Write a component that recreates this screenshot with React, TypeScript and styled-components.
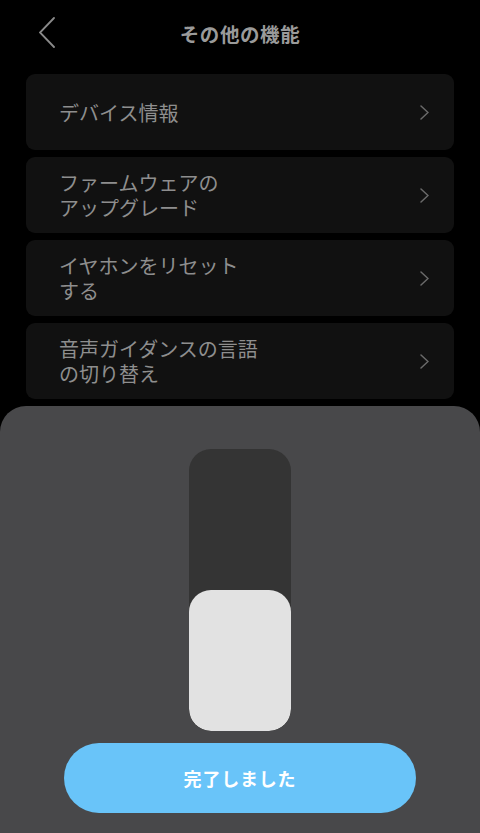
import React from "react";
import styled, { createGlobalStyle } from "styled-components";

const GlobalStyle = createGlobalStyle`
  html, body {
    margin: 0;
    padding: 0;
    background: #000;
  }
  body {
    font-family: "Noto Sans CJK JP", "Noto Sans", sans-serif;
  }
`;

const Screen = styled.div`
  position: relative;
  width: 480px;
  height: 833px;
  background: #000;
  overflow: hidden;
`;

const Header = styled.header`
  height: 66px;
  display: flex;
  align-items: center;
  justify-content: center;
  position: relative;
`;

const BackButton = styled.button`
  position: absolute;
  left: 30px;
  top: 12px;
  width: 34px;
  height: 40px;
  background: none;
  border: none;
  padding: 0;
  display: flex;
  align-items: center;
  justify-content: center;
`;

const Title = styled.h1`
  margin: 0;
  font-size: 19.5px;
  font-weight: 700;
  color: #9a9a9a;
  letter-spacing: 0.6px;
`;

const List = styled.div`
  display: flex;
  flex-direction: column;
  gap: 7px;
  padding: 8px 26px 0;
`;

const Card = styled.div`
  height: 76px;
  background: #111111;
  border-radius: 9px;
  display: flex;
  align-items: center;
  justify-content: space-between;
  padding: 0 25px 0 33px;
  box-sizing: border-box;
`;

const Label = styled.span`
  font-size: 20px;
  line-height: 25px;
  color: #8e8e8e;
  white-space: pre-line;
`;

const Sheet = styled.div`
  position: absolute;
  left: 0;
  right: 0;
  bottom: 0;
  height: 427px;
  background: #48484a;
  border-radius: 26px 26px 0 0;
  display: flex;
  flex-direction: column;
  align-items: center;
  padding-top: 43px;
  box-sizing: border-box;
`;

const Track = styled.div`
  width: 102px;
  height: 282px;
  background: #343434;
  border-radius: 22px;
  display: flex;
  flex-direction: column;
  justify-content: flex-end;
  overflow: hidden;
`;

const Fill = styled.div`
  width: 100%;
  background: #e2e2e2;
  border-radius: 22px;
`;

const DoneButton = styled.button`
  margin-top: 12px;
  width: 352px;
  height: 70px;
  border: none;
  border-radius: 35px;
  background: #69c4f9;
  color: #ffffff;
  font-family: inherit;
  font-size: 18px;
  font-weight: 700;
  letter-spacing: 0.8px;
`;

const Chevron = ({ dir, color, w, h, sw }: { dir: "left" | "right"; color: string; w: number; h: number; sw: number }) => (
  <svg width={w} height={h} viewBox={`0 0 ${w} ${h}`} fill="none">
    <polyline
      points={dir === "left" ? `${w - 1},1 1,${h / 2} ${w - 1},${h - 1}` : `1,1 ${w - 1},${h / 2} 1,${h - 1}`}
      stroke={color}
      strokeWidth={sw}
      strokeLinecap="round"
      strokeLinejoin="miter"
    />
  </svg>
);

const items = [
  "デバイス情報",
  "ファームウェアの\nアップグレード",
  "イヤホンをリセット\nする",
  "音声ガイダンスの言語\nの切り替え",
];

const App = () => {
  const level = 0.5;
  return (
    <Screen>
      <GlobalStyle />
      <Header>
        <BackButton>
          <Chevron dir="left" color="#8a8a8a" w={16} h={31} sw={1.8} />
        </BackButton>
        <Title>その他の機能</Title>
      </Header>
      <List>
        {items.map((t) => (
          <Card key={t}>
            <Label>{t}</Label>
            <Chevron dir="right" color="#6a6a6a" w={9} h={15} sw={1.5} />
          </Card>
        ))}
      </List>
      <Sheet>
        <Track>
          <Fill style={{ height: `${level * 100}%` }} />
        </Track>
        <DoneButton>完了しました</DoneButton>
      </Sheet>
    </Screen>
  );
};

export default App;
